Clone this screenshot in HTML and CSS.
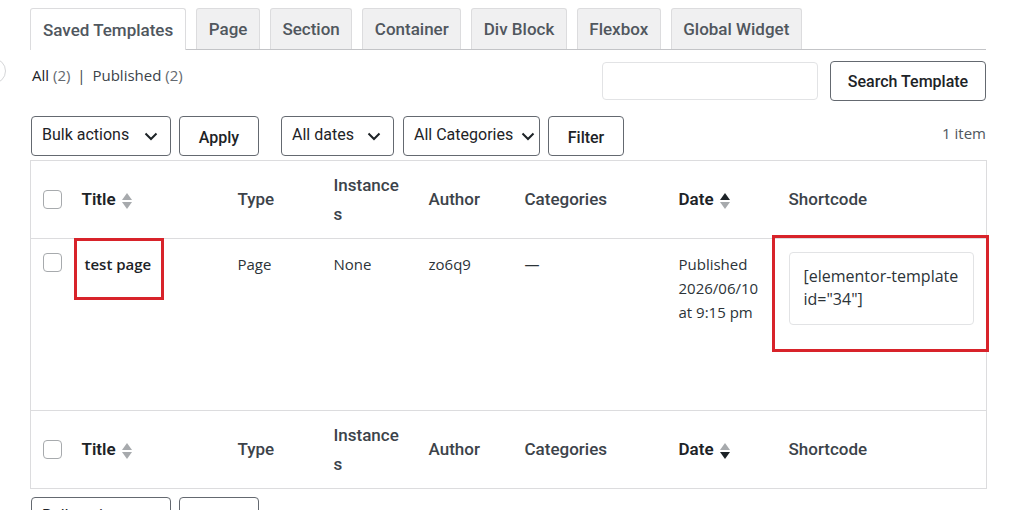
FILE: index.html
```html
<!DOCTYPE html>
<html lang="en">
<head>
  <meta charset="UTF-8">
  <title>Saved Templates</title>
  <link rel="stylesheet" href="styles.css">
</head>
<body>
  <!-- help bubble peeking in from the left edge -->
  <div class="edge-bubble"></div>

  <div class="wrap">
    <!-- Template type tabs -->
    <nav class="tabs">
      <a class="tab active">Saved Templates</a>
      <a class="tab">Page</a>
      <a class="tab">Section</a>
      <a class="tab">Container</a>
      <a class="tab">Div Block</a>
      <a class="tab">Flexbox</a>
      <a class="tab">Global Widget</a>
    </nav>

    <!-- Status links & search -->
    <div class="subbar">
      <div class="status-links">
        <span class="current">All</span> <span class="count">(2)</span>
        <span class="sep">|</span>
        <span>Published</span> <span class="count">(2)</span>
      </div>
      <div class="search-box">
        <input type="search" class="search-input">
        <button class="btn">Search Template</button>
      </div>
    </div>

    <!-- Top filters -->
    <div class="tablenav">
      <div class="actions">
        <div class="select bulk">Bulk actions
          <svg width="14" height="9" viewBox="0 0 14 9"><polyline points="1.5,1.5 7,7 12.5,1.5" fill="none" stroke="#1d2327" stroke-width="2"/></svg>
        </div>
        <button class="btn apply">Apply</button>
      </div>
      <div class="actions filters">
        <div class="select dates">All dates
          <svg width="14" height="9" viewBox="0 0 14 9"><polyline points="1.5,1.5 7,7 12.5,1.5" fill="none" stroke="#1d2327" stroke-width="2"/></svg>
        </div>
        <div class="select cats">All Categories
          <svg width="14" height="9" viewBox="0 0 14 9"><polyline points="1.5,1.5 7,7 12.5,1.5" fill="none" stroke="#1d2327" stroke-width="2"/></svg>
        </div>
        <button class="btn filter">Filter</button>
      </div>
      <div class="items-count">1 item</div>
    </div>

    <table class="list-table">
      <colgroup>
        <col class="c-cb"><col class="c-title"><col class="c-type"><col class="c-inst">
        <col class="c-author"><col class="c-cats"><col class="c-date"><col class="c-short">
      </colgroup>
      <thead>
        <tr class="head-row">
          <th class="cb"><span class="checkbox"></span></th>
          <th class="sorted">Title <span class="sort"><i class="up"></i><i class="down"></i></span></th>
          <th>Type</th>
          <th><div class="narrow">Instances</div></th>
          <th>Author</th>
          <th>Categories</th>
          <th class="sorted">Date <span class="sort"><i class="up dark"></i><i class="down"></i></span></th>
          <th>Shortcode</th>
        </tr>
      </thead>
      <tbody>
        <tr class="body-row">
          <td class="cb"><span class="checkbox"></span></td>
          <td class="title-cell"><div class="cell-inner"><strong>test page</strong><span class="mark mark-title"></span></div></td>
          <td>Page</td>
          <td>None</td>
          <td>zo6q9</td>
          <td>—</td>
          <td>Published<br>2026/06/10<br>at 9:15 pm</td>
          <td class="short-cell"><div class="cell-inner">
            <div class="shortcode">[elementor-template id="34"]</div>
            <span class="mark mark-short"></span>
          </div></td>
        </tr>
      </tbody>
      <tfoot>
        <tr class="head-row">
          <th class="cb"><span class="checkbox"></span></th>
          <th class="sorted">Title <span class="sort"><i class="up"></i><i class="down"></i></span></th>
          <th>Type</th>
          <th><div class="narrow">Instances</div></th>
          <th>Author</th>
          <th>Categories</th>
          <th class="sorted">Date <span class="sort"><i class="up"></i><i class="down dark"></i></span></th>
          <th>Shortcode</th>
        </tr>
      </tfoot>
    </table>

    <!-- Bottom actions -->
    <div class="tablenav bottom">
      <div class="actions">
        <div class="select bulk">Bulk actions
          <svg width="14" height="9" viewBox="0 0 14 9"><polyline points="1.5,1.5 7,7 12.5,1.5" fill="none" stroke="#1d2327" stroke-width="2"/></svg>
        </div>
        <button class="btn apply">Apply</button>
      </div>
      <div class="items-count">1 item</div>
    </div>
  </div>
</body>
</html>
```

FILE: styles.css
```css
html {
  overflow: hidden;
}
body {
  margin: 0;
  padding: 0;
  background-color: #fff;
  font-family: "Open Sans", "Liberation Sans", sans-serif;
  font-size: 15px;
  color: #2c3338;
  position: relative;
  min-height: 100vh;
}
.edge-bubble {
  position: absolute;
  left: -20px;
  top: 58px;
  width: 24px;
  height: 24px;
  border: 1px solid #d5d6d8;
  border-radius: 50%;
}
.wrap {
  margin-left: 30px;
  width: 956px;
}
/* Tabs */
.tabs {
  display: flex;
  gap: 10px;
  padding-top: 8px;
  border-bottom: 1px solid #c3c4c7;
  font-family: Roboto, "Liberation Sans", sans-serif;
}
.tab {
  display: flex;
  align-items: center;
  height: 40px;
  padding: 0 11.5px;
  background-color: #f0f0f1;
  border: 1px solid #dcdcde;
  border-bottom: none;
  border-radius: 3px 3px 0 0;
  font-size: 17px;
  font-weight: 500;
  color: #50575e;
}
.tab.active {
  background-color: #fff;
  color: #50575e;
  padding: 0 12px;
  margin-bottom: -1px;
  height: 41px;
}
/* Status links + search */
.subbar {
  display: flex;
  justify-content: space-between;
  padding-top: 11px;
}
.status-links {
  margin-top: 3px;
  margin-left: 2px;
  line-height: 22px;
  font-size: 15px;
  color: #3c434a;
}
.status-links .current {
  color: #1d2327;
}
.status-links .count {
  color: #646970;
}
.status-links .sep {
  color: #3c434a;
  margin: 0 3px;
}
.search-box {
  display: flex;
  gap: 12px;
  align-items: flex-start;
}
.search-input {
  box-sizing: border-box;
  width: 216px;
  height: 38px;
  margin-top: 1px;
  border: 1px solid #e2e3e5;
  border-radius: 4px;
}
.btn {
  box-sizing: border-box;
  height: 40px;
  padding: 0 18px;
  background-color: #fff;
  border: 1px solid #646970;
  border-radius: 4px;
  font-family: Roboto, "Liberation Sans", sans-serif;
  font-size: 16px;
  font-weight: 500;
  color: #1d2327;
}
.search-box .btn {
  width: 156px;
  padding: 0;
}
/* Filter bar */
.tablenav {
  display: flex;
  align-items: center;
  margin-top: 15px;
  height: 40px;
}
.tablenav.bottom {
  margin-top: 8px;
}
.actions {
  display: flex;
  gap: 8px;
  margin-left: 1px;
}
.actions.filters {
  margin-left: 22px;
}
.select {
  box-sizing: border-box;
  height: 40px;
  display: flex;
  align-items: center;
  justify-content: space-between;
  padding: 0 12px 0 10px;
  border: 1px solid #646970;
  border-radius: 4px;
  font-family: Roboto, "Liberation Sans", sans-serif;
  font-size: 16px;
  color: #1d2327;
  padding-bottom: 3px;
}
.select svg {
  margin-top: 3px;
}
.select.bulk { width: 140px; }
.select.dates { width: 113px; }
.select.cats { width: 137px; padding-right: 4px; }
.btn.apply { width: 80px; padding: 0; padding-top: 3px; }
.btn.filter { width: 76px; padding: 0; padding-top: 3px; }
.actions.filters .select.cats { margin-left: 1px; }
.items-count {
  margin-left: auto;
  margin-top: -6px;
  font-size: 15px;
  color: #50575e;
}
/* Table */
.list-table {
  margin-top: 4px;
  width: 956px;
  table-layout: fixed;
  border-collapse: collapse;
  border: 1px solid #dcdcde;
}
.c-cb { width: 42px; }
.c-title { width: 155px; }
.c-type { width: 96px; }
.c-inst { width: 95px; }
.c-author { width: 96px; }
.c-cats { width: 154px; }
.c-date { width: 110px; }
.c-short { width: 208px; }
.list-table th {
  text-align: left;
  padding: 0 10px;
  font-family: Roboto, "Liberation Sans", sans-serif;
  font-size: 17px;
  font-weight: 500;
  color: #3c434a;
  line-height: 29px;
  vertical-align: middle;
}
.list-table th.sorted {
  color: #1d2327;
  font-weight: 600;
}
.list-table th.sorted:nth-child(2) {
  padding-left: 9px;
}
.head-row {
  height: 78px;
}
thead .head-row {
  border-bottom: 1px solid #dcdcde;
}
tfoot .head-row {
  border-top: 1px solid #dcdcde;
}
.list-table th.cb,
.list-table td.cb {
  padding: 0 0 0 12px;
}
.checkbox {
  display: block;
  box-sizing: border-box;
  width: 19px;
  height: 19px;
  border: 1px solid #a7aaad;
  border-radius: 4px;
  background-color: #fff;
}
.narrow {
  width: 68px;
  word-break: break-all;
}
.sort {
  display: inline-flex;
  flex-direction: column;
  gap: 2px;
  vertical-align: 5px;
  margin-left: 2px;
}
.sort i {
  width: 0;
  height: 0;
  border-left: 5px solid transparent;
  border-right: 5px solid transparent;
}
.sort .up {
  border-bottom: 7px solid #a7aaad;
}
.sort .down {
  border-top: 7px solid #a7aaad;
}
.sort .up.dark {
  border-bottom-color: #1d2327;
}
.sort .down.dark {
  border-top-color: #1d2327;
}
.body-row {
  height: 172px;
}
.body-row td {
  vertical-align: top;
  padding: 13px 10px 0;
  line-height: 24px;
  color: #2c3338;
}
.body-row td.cb {
  padding-top: 14px;
}
.title-cell strong {
  font-weight: 600;
  color: #1d2327;
  margin-left: 2px;
}
.cell-inner {
  position: relative;
}
/* red annotation boxes */
.mark {
  position: absolute;
  border: 3px solid #d8232a;
  box-sizing: border-box;
}
.mark-title {
  left: -9px;
  top: -14px;
  width: 90px;
  height: 62px;
}
.short-cell {
  padding-left: 10px !important;
}
.shortcode {
  box-sizing: border-box;
  width: 185px;
  height: 73px;
  border: 1px solid #e2e3e5;
  border-radius: 4px;
  padding: 12px 0 0 14px;
  line-height: 23px;
  font-size: 16px;
  color: #2c3338;
}
.mark-short {
  left: -17px;
  top: -17px;
  width: 217px;
  height: 117px;
}
```
